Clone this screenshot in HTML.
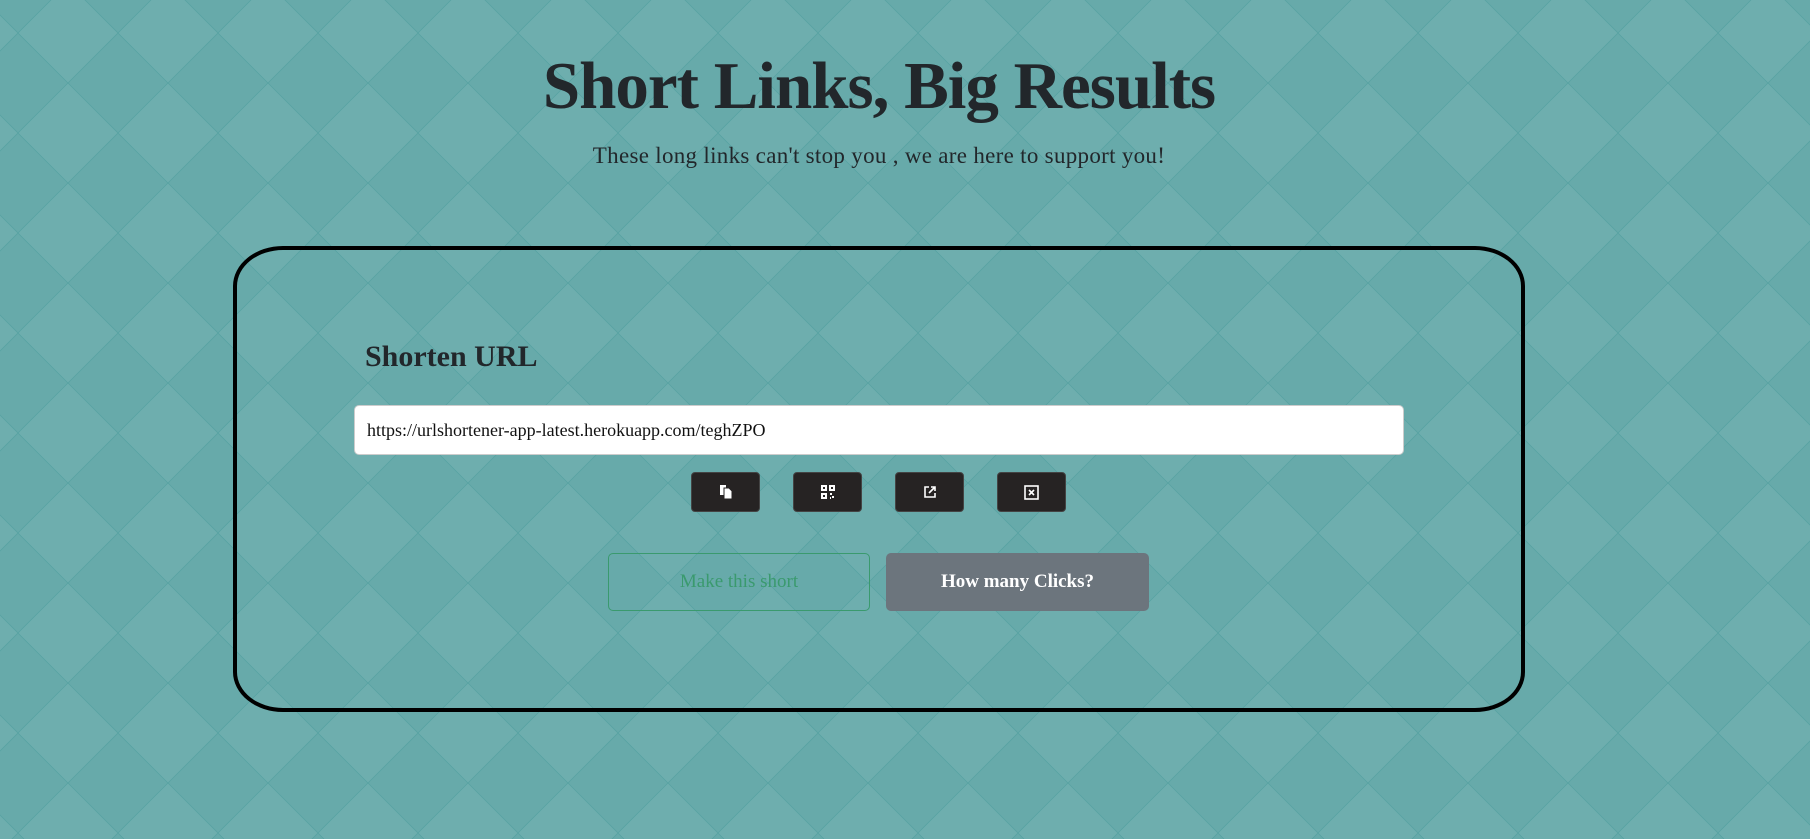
<!DOCTYPE html>
<html><head><meta charset="utf-8">
<style>
html,body{margin:0;width:1810px;height:839px;overflow:hidden;background:#66a9a9;font-family:"Liberation Serif",serif;}
#bg{position:absolute;left:0;top:0}
h1{position:absolute;left:0;width:1758px;top:46px;margin:0;text-align:center;font-size:67px;font-weight:bold;color:#22272b;letter-spacing:-1px;line-height:80px}
.sub{position:absolute;left:0;width:1758px;top:141px;text-align:center;font-size:23px;color:#22272b;line-height:30px;letter-spacing:0.3px}
.box{position:absolute;left:233px;top:246px;width:1284px;height:458px;border:4px solid #000;border-radius:50px/40px}
.h2{position:absolute;left:365px;top:340px;font-size:30px;font-weight:bold;color:#22272b}
.inp{position:absolute;left:354px;top:405px;height:50px;background:#fff;border:1px solid #ccc;border-radius:5px;font-size:18px;line-height:48px;padding-left:12px;box-sizing:border-box;color:#111;width:1050px}
.ib{position:absolute;top:472px;width:69px;height:40px;background:#262323;border-radius:4px;border:1px solid #444;box-sizing:border-box;display:flex;align-items:center;justify-content:center}
.btn{position:absolute;top:553px;height:58px;border-radius:5px;box-sizing:border-box;font-size:19px;text-align:center;line-height:56px}
</style></head><body>
<svg id="bg" width="1810" height="839">
<defs>
<pattern id="p" width="100" height="100" patternUnits="userSpaceOnUse" x="18" y="-17">
<rect width="100" height="100" fill="#67aaaa"/>
<polygon points="50,0 100,50 50,100 0,50" fill="#6eaeae"/>
<path d="M0,50 L50,0 L100,50 L50,100 Z" fill="none" stroke="#4f9e9f" stroke-width="0.8" opacity="0.7"/>
</pattern>
</defs>
<rect width="1810" height="839" fill="url(#p)"/>
</svg>
<h1>Short Links, Big Results</h1>
<div class="sub">These long links can't stop you , we are here to support you!</div>
<div class="box"></div>
<div class="h2">Shorten URL</div>
<div class="inp">https://urlshortener-app-latest.herokuapp.com/teghZPO</div>
<div class="ib" style="left:691px"><svg width="14" height="16" viewBox="0 0 14 16"><rect x="1" y="1" width="6" height="10" fill="#fff"/><path d="M5 4h5l3 3v8H5z" fill="#fff" stroke="#262323" stroke-width="1"/></svg></div>
<div class="ib" style="left:793px"><svg width="14" height="14" viewBox="0 0 14 14" fill="none" stroke="#fff" stroke-width="2"><rect x="1" y="1" width="4" height="4"/><rect x="9" y="1" width="4" height="4"/><rect x="1" y="9" width="4" height="4"/><path d="M9 9h2M12 11v2M9 13h1"/></svg></div>
<div class="ib" style="left:895px"><svg width="14" height="14" viewBox="0 0 14 14" fill="none" stroke="#fff" stroke-width="1.6"><path d="M6 2H2v10h10V8"/><path d="M8 2h4v4M12 2L6 8"/></svg></div>
<div class="ib" style="left:997px"><svg width="15" height="15" viewBox="0 0 15 15" fill="none" stroke="#fff" stroke-width="1.6"><rect x="1" y="1" width="13" height="13"/><path d="M5 5l5 5M10 5l-5 5"/></svg></div>
<div class="btn" style="left:608px;width:262px;border:1px solid #3a9a6e;color:#3a9a6e">Make this short</div>
<div class="btn" style="left:886px;width:263px;background:#6c757d;color:#fff;font-weight:bold;line-height:58px">How many Clicks?</div>
</body></html>
